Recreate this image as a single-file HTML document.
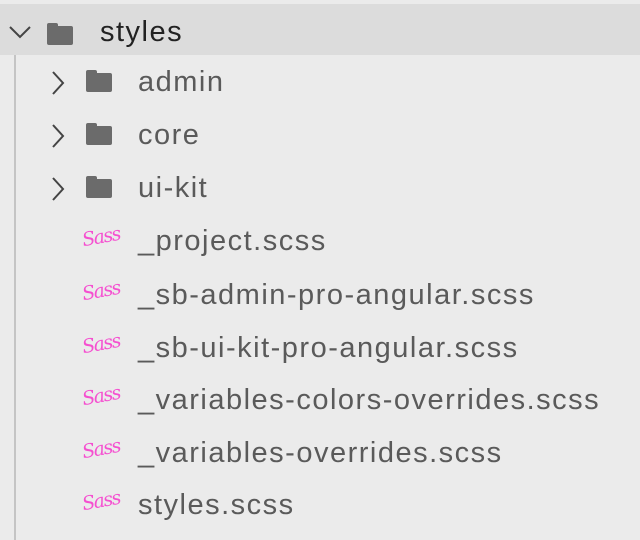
<!DOCTYPE html>
<html><head><style>
html,body{margin:0;padding:0}
body{width:640px;height:540px;background:#ebebeb;position:relative;overflow:hidden;font-family:"Liberation Sans",sans-serif}
.sel{position:absolute;left:0;top:4px;width:640px;height:51px;background:#dcdcdc}
.vl{position:absolute;left:14px;top:55px;width:2px;height:485px;background:#c4c4c4}
.row{position:absolute;left:0;height:52px;width:640px}
.t{position:absolute;left:138px;top:0;line-height:52px;font-size:29px;letter-spacing:1.5px;color:#5a5a5a;white-space:nowrap}
.chev{position:absolute}
.fold{position:absolute;width:26px;height:19px;background:#6b6b6b;border-radius:2px}
.fold:before{content:"";position:absolute;left:0;top:-3px;width:11px;height:5px;background:#6b6b6b;border-radius:2px 2px 0 0}
.sass{position:absolute;left:82px;top:11px;font-family:"DejaVu Serif",serif;font-style:italic;font-size:19px;color:#f54fd0;letter-spacing:-1.5px;transform:rotate(-10deg)}
</style></head><body>
<div class="sel"></div>
<div class="vl"></div>
<div class="row" style="top:6px">
<svg class="chev" style="left:8px;top:18px" width="24" height="16"><path d="M2 3 L12 13 L22 3" fill="none" stroke="#444" stroke-width="2"/></svg>
<div class="fold" style="left:47px;top:20px"></div>
<div class="t" style="left:100px;color:#222">styles</div></div>
<div class="row" style="top:56px">
<svg class="chev" style="left:50px;top:14px" width="16" height="26"><path d="M3 2 L13 13 L3 24" fill="none" stroke="#444" stroke-width="2"/></svg>
<div class="fold" style="left:86px;top:17px"></div><div class="t">admin</div></div>
<div class="row" style="top:109px">
<svg class="chev" style="left:50px;top:14px" width="16" height="26"><path d="M3 2 L13 13 L3 24" fill="none" stroke="#444" stroke-width="2"/></svg>
<div class="fold" style="left:86px;top:17px"></div><div class="t">core</div></div>
<div class="row" style="top:162px">
<svg class="chev" style="left:50px;top:14px" width="16" height="26"><path d="M3 2 L13 13 L3 24" fill="none" stroke="#444" stroke-width="2"/></svg>
<div class="fold" style="left:86px;top:17px"></div><div class="t">ui-kit</div></div>
<div class="row" style="top:215px"><div class="sass">Sass</div><div class="t">_project.scss</div></div>
<div class="row" style="top:269px"><div class="sass">Sass</div><div class="t">_sb-admin-pro-angular.scss</div></div>
<div class="row" style="top:322px"><div class="sass">Sass</div><div class="t">_sb-ui-kit-pro-angular.scss</div></div>
<div class="row" style="top:374px"><div class="sass">Sass</div><div class="t">_variables-colors-overrides.scss</div></div>
<div class="row" style="top:427px"><div class="sass">Sass</div><div class="t">_variables-overrides.scss</div></div>
<div class="row" style="top:479px"><div class="sass">Sass</div><div class="t">styles.scss</div></div>
</body></html>
